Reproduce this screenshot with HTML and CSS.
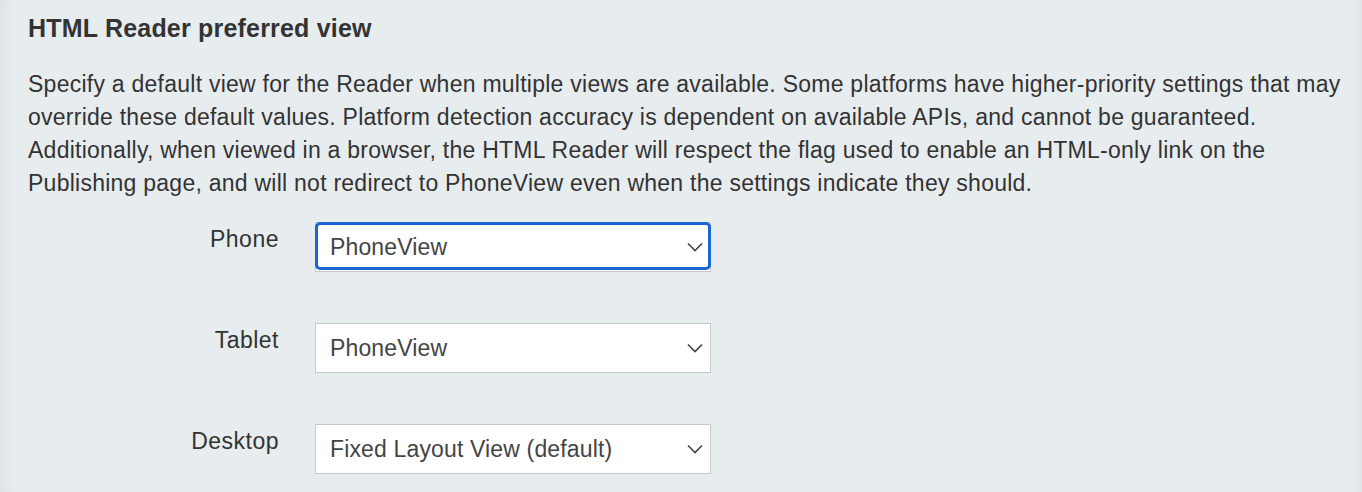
FILE: index.html
```html
<!DOCTYPE html>
<html lang="en">
<head>
    <meta charset="UTF-8">
    <meta name="viewport" content="width=device-width, initial-scale=1.0">
    <title>HTML Reader preferred view</title>
    <link rel="stylesheet" href="styles.css">
</head>
<body>
    <div class="panel">
        <h2 class="title">HTML Reader preferred view</h2>
        <p class="desc">Specify a default view for the Reader when multiple views are available. Some platforms have higher-priority settings that may override these default values. Platform detection accuracy is dependent on available APIs, and cannot be guaranteed. Additionally, when viewed in a browser, the HTML Reader will respect the flag used to enable an HTML-only link on the Publishing page, and will not redirect to PhoneView even when the settings indicate they should.</p>

        <div class="rows">
            <div class="row">
                <label class="label">Phone</label>
                <div class="select">
                    <div class="select-inner focused">
                        <span class="value">PhoneView</span>
                        <svg class="chevron" width="16" height="10" viewBox="0 0 16 10"><path d="M1 1.5 L8 8.5 L15 1.5" fill="none" stroke="#444" stroke-width="1.6"/></svg>
                    </div>
                </div>
            </div>
            <div class="row">
                <label class="label">Tablet</label>
                <div class="select">
                    <div class="select-inner">
                        <span class="value">PhoneView</span>
                        <svg class="chevron" width="16" height="10" viewBox="0 0 16 10"><path d="M1 1.5 L8 8.5 L15 1.5" fill="none" stroke="#444" stroke-width="1.6"/></svg>
                    </div>
                </div>
            </div>
            <div class="row">
                <label class="label">Desktop</label>
                <div class="select">
                    <div class="select-inner">
                        <span class="value">Fixed Layout View (default)</span>
                        <svg class="chevron" width="16" height="10" viewBox="0 0 16 10"><path d="M1 1.5 L8 8.5 L15 1.5" fill="none" stroke="#444" stroke-width="1.6"/></svg>
                    </div>
                </div>
            </div>
        </div>
    </div>
</body>
</html>
```

FILE: styles.css
```css
body {
    margin: 0;
    font-family: "Liberation Sans", Arial, sans-serif;
    color: #333;
    background-color: #e7ecef;
}
.panel {
    height: 492px;
    box-sizing: border-box;
    padding: 13px 14px 0 28px;
    box-shadow: inset 14px 0 14px -10px rgba(0, 0, 0, 0.05), inset -10px 0 10px -8px rgba(0, 0, 0, 0.05);
}
.title {
    margin: 0;
    font-size: 25px;
    line-height: 30px;
    font-weight: bold;
    letter-spacing: 0.2px;
    color: #333;
}
.desc {
    margin: 25px 0 0 0;
    font-size: 23px;
    line-height: 33px;
    letter-spacing: 0.25px;
    color: #333;
}
.rows {
    margin-top: 22px;
    display: flex;
    flex-direction: column;
    gap: 51px;
}
.row {
    display: flex;
    align-items: flex-start;
}
.label {
    width: 251px;
    text-align: right;
    font-size: 23px;
    line-height: 26px;
    padding-top: 4px;
    margin-right: 36px;
    letter-spacing: 0.5px;
}
.select {
    width: 396px;
    height: 50px;
    box-sizing: border-box;
    border: 1px solid #c8c8c8;
    background: #fff;
}
.select-inner {
    height: 100%;
    box-sizing: border-box;
    display: flex;
    align-items: center;
    justify-content: space-between;
    padding: 3px 5px 0 12px;
    border: 3px solid transparent;
    border-radius: 5px;
    margin: -1px;
}
.select-inner.focused {
    border-color: #1a66d2;
}
.value {
    font-size: 23px;
    letter-spacing: 0.15px;
    color: #444;
}
.chevron {
    margin-top: -2px;
}
```
